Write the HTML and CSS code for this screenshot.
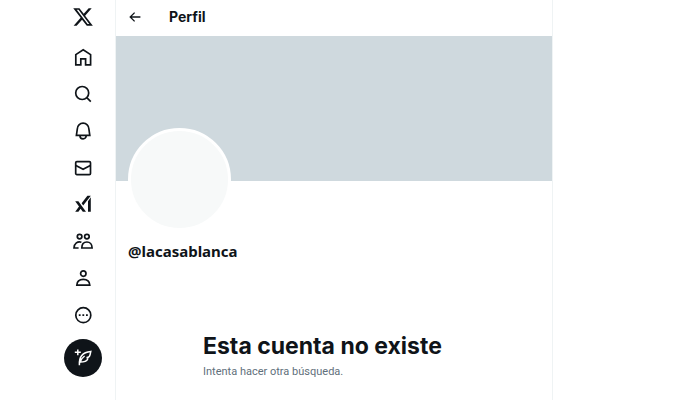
FILE: index.html
```html
<!DOCTYPE html>
<html lang="es">
  <head>
    <meta charset="UTF-8" />
    <meta name="viewport" content="width=device-width, initial-scale=1.0" />
    <title>Perfil / X</title>
    <link rel="stylesheet" href="styles.css">
  </head>
  <body>
    <div class="layout">
      <header class="sidebar">
        <nav class="nav">
          <a class="nav-link logo" href="#" aria-label="X">
            <svg class="icon" viewBox="1 1 22 22">
              <path class="solid" d="M18.244 2.25h3.308l-7.227 8.26 8.502 11.24H16.17l-5.214-6.817L4.99 21.75H1.68l7.73-8.835L1.254 2.25H8.08l4.713 6.231zm-1.161 17.52h1.833L7.084 4.126H5.117z" />
            </svg>
          </a>
          <a class="nav-link" href="#" aria-label="Inicio">
            <svg class="icon" viewBox="0 0 20 20">
              <path d="M2.8 7.6L10.2 2.8l7.4 4.8v10.2h-5v-6H7.8v6h-5z" />
            </svg>
          </a>
          <a class="nav-link" href="#" aria-label="Explorar">
            <svg class="icon" viewBox="0 0 20 20">
              <circle cx="9.2" cy="9" r="6.5" />
              <path d="M13.8 13.6l4 4" />
            </svg>
          </a>
          <a class="nav-link" href="#" aria-label="Notificaciones">
            <svg class="icon" viewBox="0 0 20 20">
              <path d="M3.4 14.4l.9-6.4a5.8 5.8 0 0 1 11.6 0l.9 6.4z" />
              <path d="M7 14.8a3 3 0 0 0 6.2 0" />
            </svg>
          </a>
          <a class="nav-link" href="#" aria-label="Mensajes">
            <svg class="icon" viewBox="0 0 20 20">
              <rect x="2.7" y="3.6" width="14.8" height="13" rx="1.2" />
              <path d="M2.9 7.6l7.2 3.6 7.2-3.6" />
            </svg>
          </a>
          <a class="nav-link" href="#" aria-label="Grok">
            <svg class="icon" viewBox="0 0 20 20">
              <path class="solid" d="M2.2 6.2h3.2l7.6 10.6H9.8zM2.2 16.8l4-5.6 1.6 2.2-2.4 3.4zM8.6 8.2L14.4.8h3.4L10.2 10.4zM15 6.2l2.8-4v14.6H15z" />
            </svg>
          </a>
          <a class="nav-link" href="#" aria-label="Comunidades">
            <svg class="icon" viewBox="0 0 20 20">
              <circle cx="6.6" cy="4.6" r="2.3" />
              <circle cx="13.9" cy="4.6" r="2.3" />
              <path d="M8.8 16c0-3.8 2.2-6 5.1-6s5.2 2.2 5.2 6z" />
              <path d="M8.4 10.2c-3.8-1.2-7.2 1.2-7.4 5.8h4.6" />
            </svg>
          </a>
          <a class="nav-link" href="#" aria-label="Perfil">
            <svg class="icon" viewBox="0 0 20 20">
              <circle cx="10.3" cy="4.6" r="2.7" />
              <path d="M3.8 16.2c.2-3.8 2.7-5.8 6.5-5.8s6.3 2 6.5 5.8z" />
            </svg>
          </a>
          <a class="nav-link" href="#" aria-label="Más opciones">
            <svg class="icon" viewBox="0 0 20 20">
              <circle cx="10.3" cy="9.2" r="7.5" />
              <path class="solid" d="M5.8 8.3h1.8v1.8H5.8zM9.4 8.3h1.8v1.8H9.4zM13 8.3h1.8v1.8H13z" />
            </svg>
          </a>
        </nav>
        <button class="post-button" type="button" aria-label="Postear">
          <svg class="icon" viewBox="0 0 20 20">
            <path d="M4.8 1.4v5.8M1.8 4.3h6" />
            <path d="M6.4 17.2c-.6-7.6 2.4-13 11.4-13.8-.4 2.4-.6 3.6-1.4 5-.6 1-1.6 1.2-2.8 1.2 1 .4 1.4.8 1 1.6-1 2.2-3.2 2.8-7.4 2.8M6.6 15c1-3.2 2.4-5.2 5-7" />
          </svg>
        </button>
      </header>

      <main class="column">
        <div class="topbar">
          <a class="back" href="#" aria-label="Atrás">
            <svg class="back-icon" viewBox="0 0 12 12">
              <path d="M11.4 6H1.4M5.6 1.6L1.2 6l4.4 4.4" />
            </svg>
          </a>
          <h2 class="topbar-title">Perfil</h2>
        </div>
        <div class="banner"></div>
        <div class="profile">
          <div class="avatar"></div>
          <p class="handle">@lacasablanca</p>
        </div>
        <div class="empty">
          <h1 class="empty-title">Esta cuenta no existe</h1>
          <p class="empty-text">Intenta hacer otra búsqueda.</p>
        </div>
      </main>
    </div>
  </body>
</html>
```

FILE: styles.css
```css
* {
  margin: 0;
  padding: 0;
  box-sizing: border-box;
}

body {
  background-color: #fff;
  color: #0f1419;
  font-family: Inter, Roboto, sans-serif;
}

.layout {
  display: grid;
  grid-template-columns: 115fr 438fr 127fr;
  min-height: 100vh;
}

.sidebar {
  display: flex;
  flex-direction: column;
  align-items: flex-end;
  padding-right: 13px;
}

.nav {
  display: flex;
  flex-direction: column;
}

.nav-link {
  display: flex;
  align-items: center;
  justify-content: center;
  width: 38px;
  height: 37px;
  color: inherit;
}

.logo {
  height: 34px;
  margin-bottom: 4px;
}

.icon {
  width: 20px;
  height: 20px;
}

.icon,
.back-icon {
  fill: none;
  stroke: currentColor;
  stroke-width: 1.7;
}

.solid {
  fill: currentColor;
  stroke: none;
}

.post-button {
  display: flex;
  align-items: center;
  justify-content: center;
  width: 38px;
  height: 38px;
  margin-top: 5px;
  border: none;
  border-radius: 50%;
  background-color: #0f1419;
  color: #fff;
  cursor: pointer;
}

.post-button .icon {
  stroke-width: 1.5;
}

.column {
  border-left: 1px solid #eff3f4;
  border-right: 1px solid #eff3f4;
}

.topbar {
  display: flex;
  align-items: center;
  height: 36px;
  padding: 0 13px 3px;
}

.back {
  display: flex;
  width: 40px;
  color: inherit;
}

.back-icon {
  width: 12px;
  height: 12px;
  stroke-width: 1.3;
}

.topbar-title {
  font-size: 14px;
  line-height: 20px;
}

.banner {
  height: 145px;
  background-color: #cfd9de;
}

.profile {
  padding: 0 12px;
}

.avatar {
  width: 103px;
  height: 103px;
  margin-top: -53px;
  border: 3px solid #fff;
  border-radius: 50%;
  background-color: #f7f9f9;
}

.handle {
  margin-top: 10px;
  font-family: "Noto Sans", sans-serif;
  font-size: 15px;
  font-weight: 700;
  line-height: 20px;
}

.empty {
  max-width: 290px;
  margin: 69px auto 0;
  padding: 0 14px;
}

.empty-title {
  font-size: 23px;
  font-weight: 700;
  line-height: 32px;
  white-space: nowrap;
}

.empty-text {
  margin-top: 2px;
  color: #5f6f7b;
  font-family: Roboto, sans-serif;
  font-size: 11px;
  line-height: 16px;
}
```
